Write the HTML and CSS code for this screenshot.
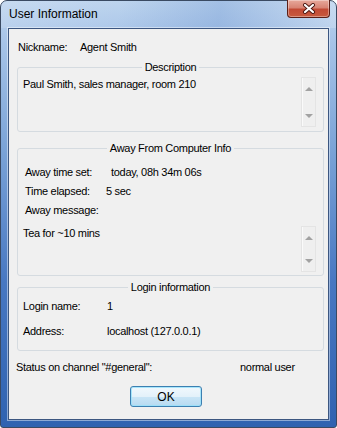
FILE: index.html
```html
<!DOCTYPE html>
<html lang="en">
<head>
    <meta charset="UTF-8">
    <meta name="viewport" content="width=device-width, initial-scale=1.0">
    <title>User Information</title>
    <link rel="stylesheet" href="styles.css">
</head>
<body>
    <div class="window">
        <div class="titlebar">
            <span class="title">User Information</span>
            <button class="close" type="button" aria-label="Close">
                <svg width="14" height="11" viewBox="0 0 14 11">
                    <path d="M3 2 L11 9 M11 2 L3 9" stroke="#4a1610" stroke-width="4" stroke-linecap="round"/>
                    <path d="M3 2 L11 9 M11 2 L3 9" stroke="#fff" stroke-width="2.2" stroke-linecap="round"/>
                </svg>
            </button>
        </div>
        <div class="panel">
            <div class="nick">
                <span class="nick-label">Nickname:</span>
                <span>Agent Smith</span>
            </div>

            <fieldset class="group group-desc">
                <legend>Description</legend>
                <div class="memo">
                    <div class="memo-text">Paul Smith, sales manager, room 210</div>
                    <div class="scrollbar tall"><span class="arrow up"></span><span class="arrow down"></span></div>
                </div>
            </fieldset>

            <fieldset class="group group-away">
                <legend>Away From Computer Info</legend>
                <div class="rows">
                    <div class="row"><span class="lbl-set">Away time set:</span><span>today, 08h 34m 06s</span></div>
                    <div class="row"><span class="lbl-elapsed">Time elapsed:</span><span>5 sec</span></div>
                    <div class="row"><span>Away message:</span></div>
                </div>
                <div class="memo memo-away">
                    <div class="memo-text">Tea for ~10 mins</div>
                    <div class="scrollbar short"><span class="arrow up"></span><span class="arrow down"></span></div>
                </div>
            </fieldset>

            <fieldset class="group group-login">
                <legend>Login information</legend>
                <div class="login-rows">
                    <div class="login-row"><span class="lbl-login">Login name:</span><span>1</span></div>
                    <div class="login-row"><span class="lbl-login">Address:</span><span>localhost (127.0.0.1)</span></div>
                </div>
            </fieldset>

            <div class="status">
                <span class="lbl-status">Status on channel "#general":</span>
                <span>normal user</span>
            </div>

            <button class="ok" type="button">OK</button>
        </div>
    </div>
</body>
</html>
```

FILE: styles.css
```css
* { margin: 0; padding: 0; box-sizing: border-box; }
body {
    font-family: 'Liberation Sans', Arial, sans-serif;
    font-size: 11px;
    letter-spacing: -0.3px;
    color: #000;
    width: 337px;
    height: 428px;
    overflow: hidden;
    background: #fff;
}
.window {
    width: 337px;
    height: 428px;
    border: 1px solid #3a4a62;
    border-radius: 7px 7px 3px 3px;
    background: linear-gradient(180deg, #bdd4ee 0, #a7c4e8 40px, #7aa3d7 150px, #4878c2 280px, #2f62b0 428px);
    padding: 0 7px 7px;
    display: flex;
    flex-direction: column;
}
.titlebar {
    height: 27px;
    display: flex;
    justify-content: space-between;
    align-items: flex-start;
    background: linear-gradient(100deg, rgba(255,255,255,0.15) 0, rgba(255,255,255,0) 35%, rgba(60,110,190,0.2) 65%, rgba(255,255,255,0.2) 100%);
    margin: 0 -7px;
    padding: 0 7px;
    border-radius: 6px 6px 0 0;
}
.title {
    font-size: 12px;
    letter-spacing: 0;
    line-height: 15px;
    margin: 6px 0 0 1px;
}
.close {
    width: 43px;
    height: 18px;
    margin: -1px -1px 0 0;
    border: 1px solid #5b1f17;
    border-top: none;
    border-radius: 0 0 4px 4px;
    background: linear-gradient(180deg, #e7a99c 0, #d88474 45%, #c24a35 55%, #c85a3e 100%);
    box-shadow: inset 0 0 0 1px rgba(255,255,255,0.35);
    display: flex;
    align-items: center;
    justify-content: center;
}
.panel {
    flex: 1;
    background: #f0f0f0;
    border: 1px solid #3c5680;
    box-shadow: 0 0 0 1px rgba(255,255,255,0.45);
    padding: 11px 0 0 9px;
    display: flex;
    flex-direction: column;
    align-items: flex-start;
}
.nick {
    display: flex;
    line-height: 15px;
}
.nick-label { width: 62px; }

.group {
    width: 307px;
    margin-left: -1px;
    border: 1px solid #d5dbe0;
    border-radius: 3px;
    padding: 0;
}
.group legend {
    margin: 0 auto;
    padding: 0 3px;
    line-height: 14px;
}
.group-desc { margin-top: 5px; padding-bottom: 4px; }
.group-away { margin-top: 9px; padding-bottom: 3px; }
.group-login { margin-top: 4px; padding-bottom: 6px; }

.memo {
    display: flex;
    margin: 3px 7px 0 5px;
}
.memo-away { margin-top: 6px; }
.memo-text {
    flex: 1;
    line-height: 15px;
}
.scrollbar {
    width: 15px;
    border: 1px solid #e4e4e4;
    box-shadow: inset 1px 0 0 #fafafa;
    background: #efefef;
    display: flex;
    flex-direction: column;
    justify-content: space-between;
    align-items: center;
    padding: 9px 0 8px;
}
.scrollbar.tall { height: 50px; }
.scrollbar.short { height: 46px; }
.arrow {
    width: 0;
    height: 0;
    border-left: 4px solid transparent;
    border-right: 4px solid transparent;
}
.arrow.up { border-bottom: 4px solid #a2a2a2; }
.arrow.down { border-top: 4px solid #a2a2a2; }

.rows { padding: 8px 0 0 7px; }
.row {
    display: flex;
    line-height: 19px;
}
.lbl-set { width: 86px; }
.lbl-elapsed { width: 81px; }

.login-rows { padding-left: 5px; }
.login-row {
    display: flex;
    line-height: 25px;
}
.lbl-login { width: 84px; }

.status {
    display: flex;
    line-height: 15px;
    margin: 9px 0 0 -2px;
}
.lbl-status { width: 224px; }

.ok {
    margin: 11px 0 0 112px;
    width: 72px;
    height: 21px;
    font-family: inherit;
    font-size: 12px;
    letter-spacing: 0;
    color: #000;
    border: 1px solid #3c7fb1;
    border-radius: 3px;
    background: linear-gradient(180deg, #f1f8fd 0, #e3f1fa 50%, #c9e5f6 51%, #b7daf1 100%);
    box-shadow: inset 0 0 0 1px rgba(150,225,250,0.8);
}
```
